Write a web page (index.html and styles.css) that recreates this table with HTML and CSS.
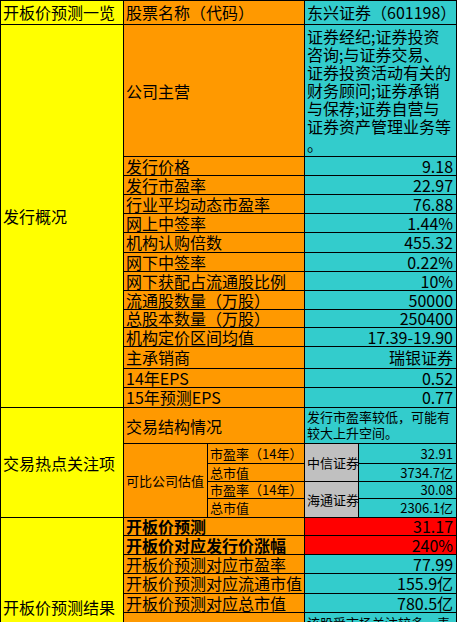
FILE: index.html
```html
<!DOCTYPE html>
<html lang="zh">
<head>
<meta charset="utf-8">
<title>开板价预测一览</title>
<link rel="stylesheet" href="styles.css">
</head>
<body>
<table class="sheet">
  <colgroup>
    <col class="col-a">
    <col class="col-b">
    <col class="col-c">
    <col class="col-d">
    <col class="col-e">
  </colgroup>
  <tbody>
    <tr class="row-head">
      <td class="y">开板价预测一览</td>
      <td class="o" colspan="2">股票名称（代码）</td>
      <td class="c" colspan="2">东兴证券（601198）</td>
    </tr>
    <tr class="row-biz">
      <td class="y" rowspan="14">发行概况</td>
      <td class="o" colspan="2">公司主营</td>
      <td class="c biz" colspan="2">证券经纪;证券投资<br>咨询;与证券交易、<br>证券投资活动有关的<br>财务顾问;证券承销<br>与保荐;证券自营与<br>证券资产管理业务等<br>。</td>
    </tr>
    <tr><td class="o" colspan="2">发行价格</td><td class="c num" colspan="2">9.18</td></tr>
    <tr><td class="o" colspan="2">发行市盈率</td><td class="c num" colspan="2">22.97</td></tr>
    <tr><td class="o" colspan="2">行业平均动态市盈率</td><td class="c num" colspan="2">76.88</td></tr>
    <tr><td class="o" colspan="2">网上中签率</td><td class="c num" colspan="2">1.44%</td></tr>
    <tr class="h20"><td class="o" colspan="2">机构认购倍数</td><td class="c num" colspan="2">455.32</td></tr>
    <tr><td class="o" colspan="2">网下中签率</td><td class="c num" colspan="2">0.22%</td></tr>
    <tr><td class="o" colspan="2">网下获配占流通股比例</td><td class="c num" colspan="2">10%</td></tr>
    <tr><td class="o" colspan="2">流通股数量（万股）</td><td class="c num" colspan="2">50000</td></tr>
    <tr class="h18"><td class="o" colspan="2">总股本数量（万股）</td><td class="c num" colspan="2">250400</td></tr>
    <tr><td class="o" colspan="2">机构定价区间均值</td><td class="c num" colspan="2">17.39-19.90</td></tr>
    <tr class="h22"><td class="o" colspan="2">主承销商</td><td class="c num" colspan="2">瑞银证券</td></tr>
    <tr><td class="o" colspan="2">14年EPS</td><td class="c num" colspan="2">0.52</td></tr>
    <tr class="h20"><td class="o" colspan="2">15年预测EPS</td><td class="c num" colspan="2">0.77</td></tr>

    <tr>
      <td class="y" rowspan="5">交易热点关注项</td>
      <td class="o" colspan="2">交易结构情况</td>
      <td class="c note" colspan="2">发行市盈率较低，可能有<br>较大上升空间。</td>
    </tr>
    <tr class="sub s20">
      <td class="o small" rowspan="4">可比公司估值</td>
      <td class="o">市盈率（14年）</td>
      <td class="g" rowspan="2">中信证券</td>
      <td class="c num">32.91</td>
    </tr>
    <tr class="sub s18"><td class="o">总市值</td><td class="c num">3734.7亿</td></tr>
    <tr class="sub s17">
      <td class="o">市盈率（14年）</td>
      <td class="g" rowspan="2">海通证券</td>
      <td class="c num">30.08</td>
    </tr>
    <tr class="sub s19"><td class="o">总市值</td><td class="c num">2306.1亿</td></tr>

    <tr class="h18">
      <td class="y result" rowspan="6">开板价预测结果</td>
      <td class="o bold" colspan="2">开板价预测</td>
      <td class="r num" colspan="2">31.17</td>
    </tr>
    <tr><td class="o bold" colspan="2">开板价对应发行价涨幅</td><td class="r num" colspan="2">240%</td></tr>
    <tr><td class="o" colspan="2">开板价预测对应市盈率</td><td class="c num" colspan="2">77.99</td></tr>
    <tr class="h20"><td class="o" colspan="2">开板价预测对应流通市值</td><td class="c num" colspan="2">155.9亿</td></tr>
    <tr><td class="o" colspan="2">开板价预测对应总市值</td><td class="c num" colspan="2">780.5亿</td></tr>
    <tr>
      <td class="o" colspan="2"></td>
      <td class="c note tail" colspan="2">该股受市场关注较多，表<br>现活跃，开板价预测<br>仅供参考，请投资者<br>注意控制风险。<br>&nbsp;</td>
    </tr>
  </tbody>
</table>
</body>
</html>
```

FILE: styles.css
```css
html, body {
  margin: 0;
  padding: 0;
  background: #ffffff;
}

body {
  font-family: "Noto Sans CJK SC", "Noto Sans", sans-serif;
  font-size: 16px;
  color: #000;
}

.sheet {
  border-collapse: collapse;
  table-layout: fixed;
  width: 457px;
}

.col-a { width: 123px; }
.col-b { width: 84px; }
.col-c { width: 97px; }
.col-d { width: 54px; }
.col-e { width: 98px; }

.sheet td {
  border: 1px solid #000;
  padding: 0 3px 0 2px;
  line-height: 18px;
  white-space: nowrap;
  vertical-align: middle;
  text-align: left;
}

.y { background: #ffff00; }
.o { background: #ff9900; }
.c { background: #33cccc; }
.r { background: #ff0000; }
.g { background: #c0c0c0; }

.num { text-align: right !important; }
.bold { font-weight: bold; }

.row-head td { line-height: 23px; }

.biz {
  padding-top: 2px !important;
  padding-bottom: 3px !important;
  line-height: 18px;
}

.h18 td { line-height: 17px; }
.h20 td { line-height: 19px; }
.h22 td { line-height: 21px; }

.note {
  font-size: 13px;
  line-height: 16px !important;
  padding-top: 1px !important;
  padding-bottom: 2px !important;
}

.tail {
  padding-top: 2px !important;
  padding-bottom: 2px !important;
}

.sub td { font-size: 13px; }
.small { font-size: 13px; }
.g { padding: 0 1px 0 2px !important; }

.s20 td { line-height: 19px; }
.s18 td { line-height: 17px; }
.s17 td { line-height: 16px; }
.s19 td { line-height: 18px; }
```
